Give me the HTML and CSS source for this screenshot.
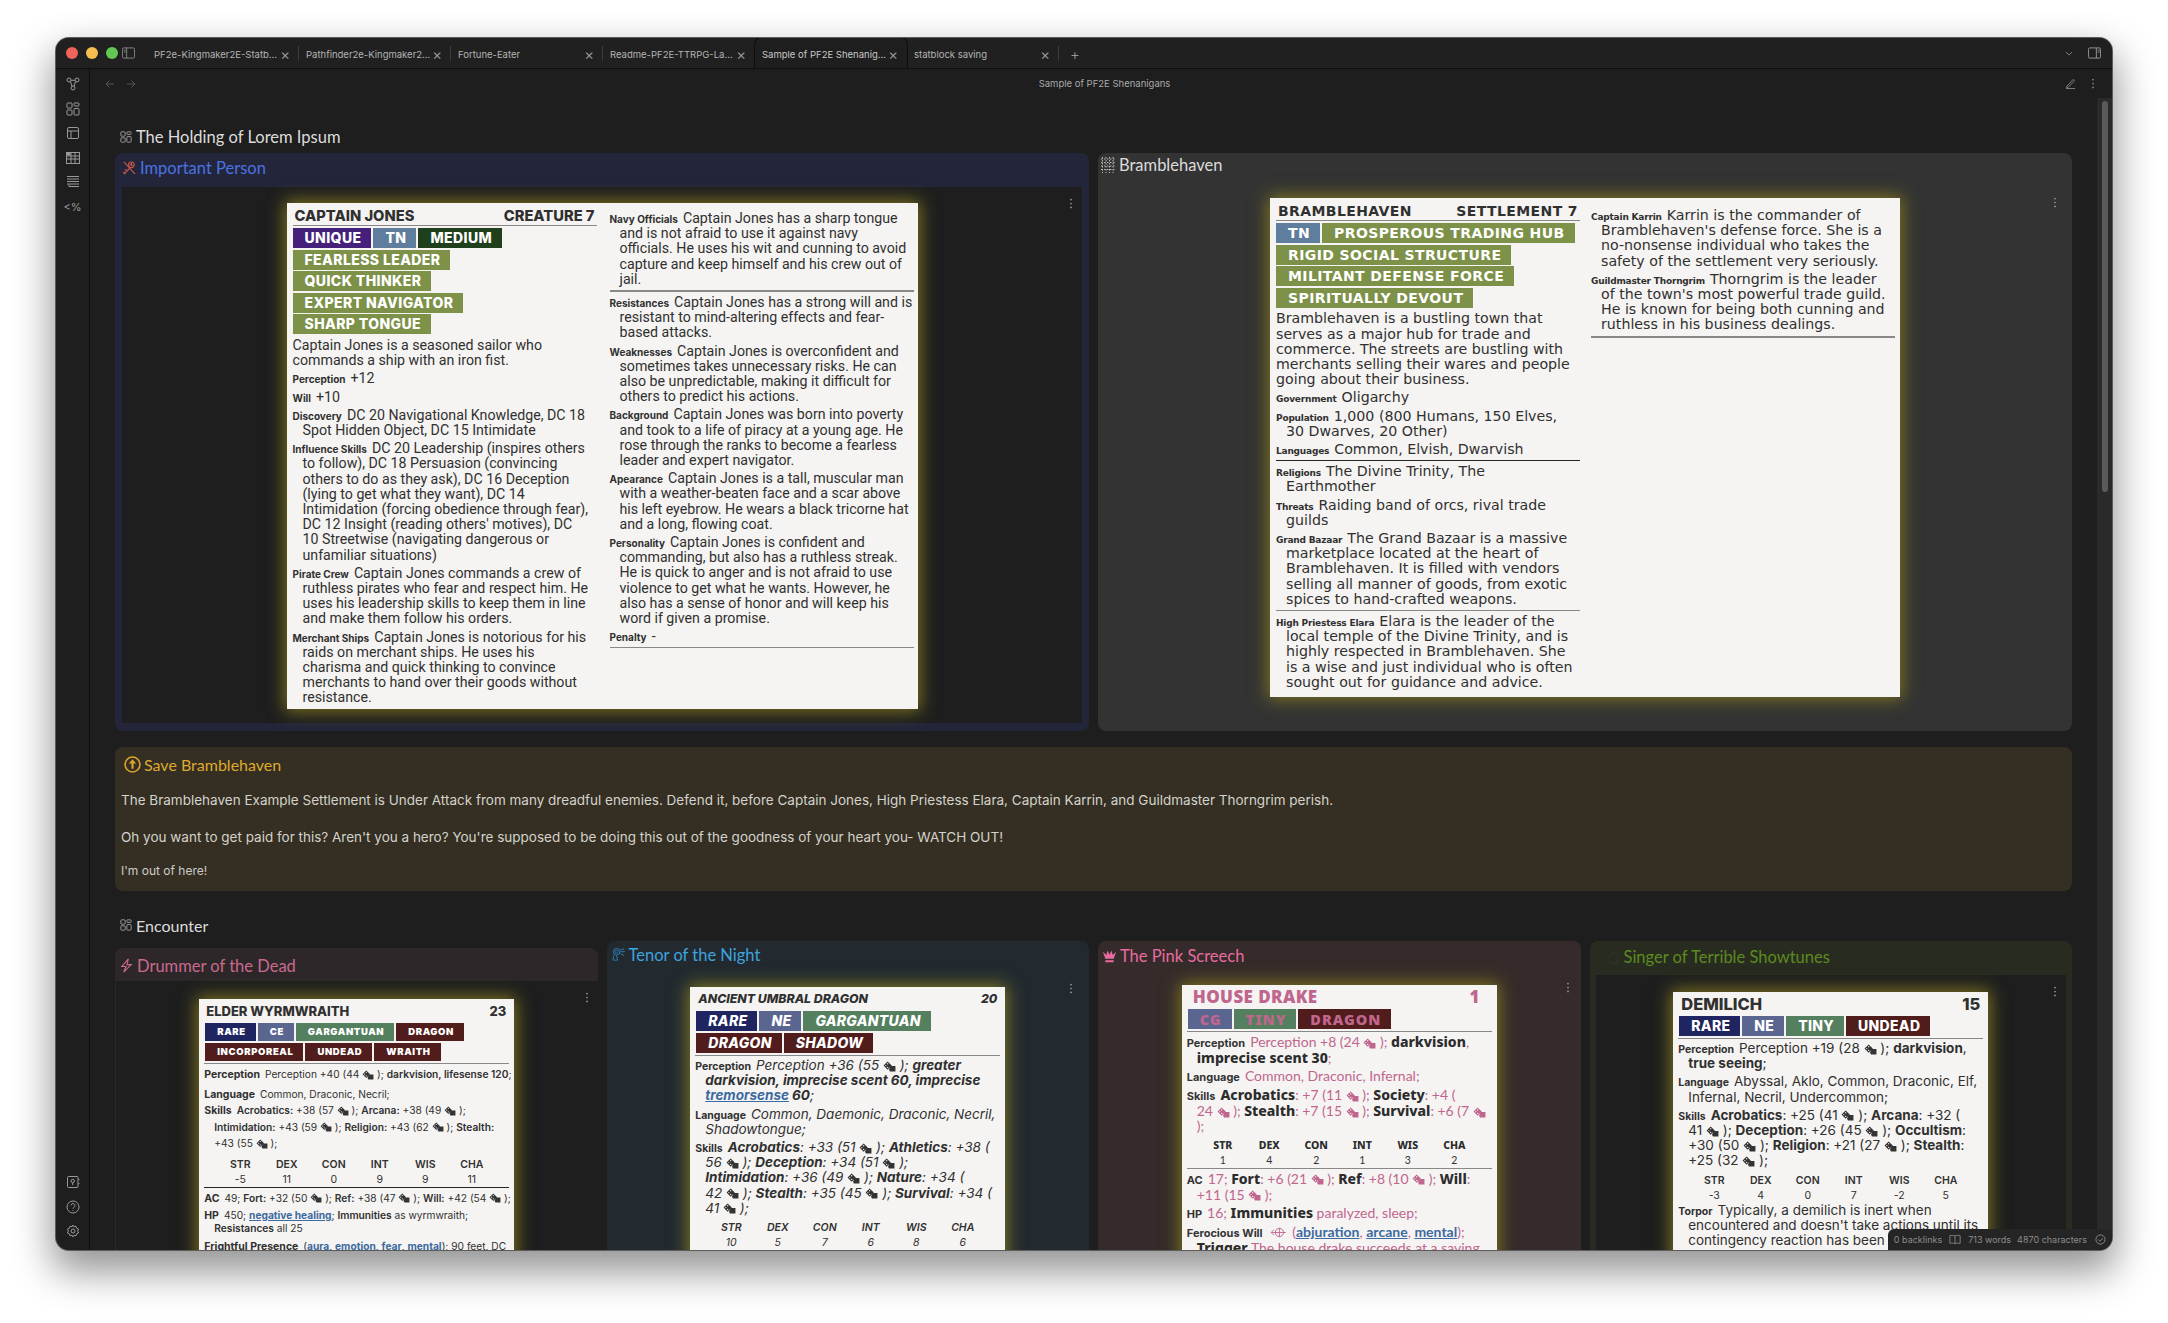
FILE: index.html
```html
<!DOCTYPE html>
<html lang="en">
<head>
<meta charset="utf-8">
<title>Sample of PF2E Shenanigans</title>
<link rel="stylesheet" href="styles.css">
</head>
<body>
<svg class="defs" aria-hidden="true">
  <symbol id="dice" viewBox="0 0 14 12"><path d="M5 0.5 9.5 5 5 9.5 0.5 5Z" fill="currentColor"/><path d="M8 5.5h5.5v6H7.5l-1-2Z" fill="currentColor"/><circle cx="5" cy="3" r=".7" fill="#f5f4f2"/><circle cx="3" cy="5" r=".7" fill="#f5f4f2"/><circle cx="5" cy="7" r=".7" fill="#f5f4f2"/></symbol>
  <symbol id="tiles" viewBox="0 0 14 14"><g fill="none" stroke="currentColor" stroke-width="1"><rect x="1" y="1" width="5" height="5" rx=".8"/><rect x="8" y="1" width="5" height="3" rx=".8"/><rect x="1" y="8" width="5" height="5" rx=".8"/><rect x="8" y="6.5" width="5" height="6.5" rx=".8"/></g></symbol>
  <symbol id="dots" viewBox="0 0 4 14"><circle cx="2" cy="2" r="1.1" fill="currentColor"/><circle cx="2" cy="7" r="1.1" fill="currentColor"/><circle cx="2" cy="12" r="1.1" fill="currentColor"/></symbol>
</svg>
<div class="window">
  <header class="tabbar">
    <span class="light red"></span><span class="light yellow"></span><span class="light green"></span>
    <svg class="sideicon" viewBox="0 0 14 12"><rect x=".5" y=".5" width="13" height="11" rx="1.5" fill="none" stroke="currentColor"/><path d="M5 .5v11" stroke="currentColor"/><path d="M2 3h2M2 5h2" stroke="currentColor"/></svg>
    <div class="tabs">
      <div class="tab"><span class="tab-name">PF2e-Kingmaker2E-Statb...</span><span class="x">×</span></div>
      <div class="tab"><span class="tab-name">Pathfinder2e-Kingmaker2...</span><span class="x">×</span></div>
      <div class="tab"><span class="tab-name">Fortune-Eater</span><span class="x">×</span></div>
      <div class="tab tab-pre"><span class="tab-name">Readme-PF2E-TTRPG-La...</span><span class="x">×</span></div>
      <div class="tab active"><span class="tab-name">Sample of PF2E Shenanig...</span><span class="x">×</span></div>
      <div class="tab"><span class="tab-name">statblock saving</span><span class="x">×</span></div>
      <span class="plus">+</span>
    </div>
    <svg class="chev" viewBox="0 0 10 6"><path d="M1 1l4 4 4-4" fill="none" stroke="currentColor"/></svg>
    <svg class="rightpanel" viewBox="0 0 14 12"><rect x=".5" y=".5" width="13" height="11" rx="1.5" fill="none" stroke="currentColor"/><path d="M9 .5v11" stroke="currentColor"/><path d="M10.500 3h2M10.500 5h2" stroke="currentColor"/></svg>
  </header>
  <div class="main">
    <nav class="ribbon">
      <svg class="rib" viewBox="0 0 14 14"><g fill="none" stroke="currentColor"><circle cx="3" cy="3" r="2"/><circle cx="11" cy="3" r="2"/><circle cx="7" cy="11" r="2"/><path d="M4.500 4.500 6 9.300M9.500 4.500 8 9.300M5 3.300h4"/></g></svg>
      <svg class="rib"><use href="#tiles"/></svg>
      <svg class="rib" viewBox="0 0 14 14"><g fill="none" stroke="currentColor"><rect x="1.500" y="1.500" width="11" height="11" rx="1.500"/><path d="M1.500 5h11M5 5v7.500"/></g></svg>
      <svg class="rib" viewBox="0 0 14 14"><g fill="none" stroke="currentColor"><rect x=".5" y="1.500" width="13" height="11"/><path d="M.5 5h13M.5 8h13M5 1.500v11M9 1.500v11"/></g><rect x="1" y="2" width="3.500" height="2.500" fill="currentColor"/></svg>
      <svg class="rib" viewBox="0 0 14 14"><path d="M1 1.500h12M1 4h12M1 6.500h12M1 9h12M3 11.500h10M3 11.500v-2" fill="none" stroke="currentColor"/></svg>
      <span class="rib-text">&lt;%</span>
      <div class="rib-spacer"></div>
      <svg class="rib" viewBox="0 0 14 14"><g fill="none" stroke="currentColor"><rect x="1.500" y="1.500" width="10.500" height="11" rx="1"/><circle cx="6.700" cy="6" r="1.700"/><path d="M6.700 7.700v2.500M13 4v1M13 8v1"/></g></svg>
      <svg class="rib" viewBox="0 0 14 14"><g fill="none" stroke="currentColor"><circle cx="7" cy="7" r="6"/><path d="M5 5.500a2 2 0 1 1 3 1.800c-.7.4-1 .8-1 1.400"/><path d="M7 10v.8"/></g></svg>
      <svg class="rib" viewBox="0 0 14 14"><g fill="none" stroke="currentColor"><circle cx="7" cy="7" r="2"/><path d="M7 1l1 1.800 2-.6.6 2 1.900.8-.8 2 .8 2-1.900.8-.6 2-2-.6-1 1.800-1-1.800-2 .6-.6-2-1.900-.8.8-2-.8-2 1.900-.8.6-2 2 .6Z"/></g></svg>
    </nav>
    <div class="content">
      <div class="viewhead">
        <svg class="nav" viewBox="0 0 10 10"><path d="M9 5H1M4.500 1.500 1 5l3.500 3.500" fill="none" stroke="currentColor"/></svg>
        <svg class="nav" viewBox="0 0 10 10"><path d="M1 5h8M5.500 1.500 9 5 5.500 8.500" fill="none" stroke="currentColor"/></svg>
        <div class="viewtitle">Sample of PF2E Shenanigans</div>
        <svg class="pencil" viewBox="0 0 12 12"><path d="M2 9 9 1.500l1.500 1.500L3.500 10 1.500 10.500ZM1 11.500h10" fill="none" stroke="currentColor"/></svg>
        <svg class="viewdots"><use href="#dots"/></svg>
      </div>
      <div class="viewbody">
        <div class="scroll">
          <h2 class="sec sec-top"><svg class="sec-icon"><use href="#tiles"/></svg>The Holding of Lorem Ipsum</h2>
          <div class="row-two">
            <section class="panel p-blue">
              <h3 class="ptitle t-blue"><svg class="picon" viewBox="0 0 16 16"><g fill="none" stroke="#c7574c" stroke-width="1.200"><path d="M2 1l12 13M2 14 8 8"/><circle cx="10" cy="4" r="3"/><path d="M8.500 3.500l3 2M10 2l.5 3"/><path d="M3 10l2-1M1 12l3 1"/></g></svg>Important Person</h3>
              <div class="pbody">
                <svg class="menu"><use href="#dots"/></svg>
                <article class="card c-captain">
                  <div class="col">
                    <div class="ttl"><span>CAPTAIN JONES</span><span>CREATURE 7</span></div>
                    <div class="tags"><b class="tag purple">UNIQUE</b><b class="tag steel">TN</b><b class="tag forest">MEDIUM</b><b class="tag olive">FEARLESS LEADER</b><br class="brk"><b class="tag olive">QUICK THINKER</b><br class="brk"><b class="tag olive">EXPERT NAVIGATOR</b><br class="brk"><b class="tag olive">SHARP TONGUE</b></div>
                    <p class="plain">Captain Jones is a seasoned sailor who<br>commands a ship with an iron fist.</p>
                    <p class="ln"><b class="lb">Perception</b>+12</p>
                    <p class="ln"><b class="lb">Will</b>+10</p>
                    <p class="ln"><b class="lb">Discovery</b>DC 20 Navigational Knowledge, DC 18<br>Spot Hidden Object, DC 15 Intimidate</p>
                    <p class="ln"><b class="lb">Influence Skills</b>DC 20 Leadership (inspires others<br>to follow), DC 18 Persuasion (convincing<br>others to do as they ask), DC 16 Deception<br>(lying to get what they want), DC 14<br>Intimidation (forcing obedience through fear),<br>DC 12 Insight (reading others' motives), DC<br>10 Streetwise (navigating dangerous or<br>unfamiliar situations)</p>
                    <p class="ln"><b class="lb">Pirate Crew</b>Captain Jones commands a crew of<br>ruthless pirates who fear and respect him. He<br>uses his leadership skills to keep them in line<br>and make them follow his orders.</p>
                    <p class="ln"><b class="lb">Merchant Ships</b>Captain Jones is notorious for his<br>raids on merchant ships. He uses his<br>charisma and quick thinking to convince<br>merchants to hand over their goods without<br>resistance.</p>
                  </div>
                  <div class="col">
                    <p class="ln"><b class="lb">Navy Officials</b>Captain Jones has a sharp tongue<br>and is not afraid to use it against navy<br>officials. He uses his wit and cunning to avoid<br>capture and keep himself and his crew out of<br>jail.</p>
                    <hr class="rule thick">
                    <p class="ln"><b class="lb">Resistances</b>Captain Jones has a strong will and is<br>resistant to mind-altering effects and fear-<br>based attacks.</p>
                    <p class="ln"><b class="lb">Weaknesses</b>Captain Jones is overconfident and<br>sometimes takes unnecessary risks. He can<br>also be unpredictable, making it difficult for<br>others to predict his actions.</p>
                    <p class="ln"><b class="lb">Background</b>Captain Jones was born into poverty<br>and took to a life of piracy at a young age. He<br>rose through the ranks to become a fearless<br>leader and expert navigator.</p>
                    <p class="ln"><b class="lb">Apearance</b>Captain Jones is a tall, muscular man<br>with a weather-beaten face and a scar above<br>his left eyebrow. He wears a black tricorne hat<br>and a long, flowing coat.</p>
                    <p class="ln"><b class="lb">Personality</b>Captain Jones is confident and<br>commanding, but also has a ruthless streak.<br>He is quick to anger and is not afraid to use<br>violence to get what he wants. However, he<br>also has a sense of honor and will keep his<br>word if given a promise.</p>
                    <p class="ln"><b class="lb">Penalty</b>-</p>
                    <hr class="rule">
                  </div>
                </article>
              </div>
            </section>
            <section class="panel p-grey">
              <h3 class="ptitle t-light"><svg class="picon" viewBox="0 0 16 16"><path d="M1 2h14M1 5.500h14M1 9h14M1 12.500h14M2.500 0v16M6 0v16M9.500 0v16M13 0v16" stroke="#bbb" stroke-dasharray="1.500 1.500" fill="none"/></svg>Bramblehaven</h3>
              <div class="pbody-flat">
                <svg class="menu menu-b"><use href="#dots"/></svg>
                <article class="card c-bramble">
                  <div class="col">
                    <div class="ttl"><span>BRAMBLEHAVEN</span><span>SETTLEMENT 7</span></div>
                    <div class="tags"><b class="tag steel">TN</b><b class="tag olive">PROSPEROUS TRADING HUB</b><b class="tag olive">RIGID SOCIAL STRUCTURE</b><br class="brk"><b class="tag olive">MILITANT DEFENSE FORCE</b><br class="brk"><b class="tag olive">SPIRITUALLY DEVOUT</b></div>
                    <p class="plain">Bramblehaven is a bustling town that<br>serves as a major hub for trade and<br>commerce. The streets are bustling with<br>merchants selling their wares and people<br>going about their business.</p>
                    <p class="ln"><b class="lb">Government</b>Oligarchy</p>
                    <p class="ln"><b class="lb">Population</b>1,000 (800 Humans, 150 Elves,<br>30 Dwarves, 20 Other)</p>
                    <p class="ln"><b class="lb">Languages</b>Common, Elvish, Dwarvish</p>
                    <hr class="rule dark">
                    <p class="ln"><b class="lb">Religions</b>The Divine Trinity, The<br>Earthmother</p>
                    <p class="ln"><b class="lb">Threats</b>Raiding band of orcs, rival trade<br>guilds</p>
                    <p class="ln"><b class="lb">Grand Bazaar</b>The Grand Bazaar is a massive<br>marketplace located at the heart of<br>Bramblehaven. It is filled with vendors<br>selling all manner of goods, from exotic<br>spices to hand-crafted weapons.</p>
                    <hr class="rule">
                    <p class="ln"><b class="lb">High Priestess Elara</b>Elara is the leader of the<br>local temple of the Divine Trinity, and is<br>highly respected in Bramblehaven. She<br>is a wise and just individual who is often<br>sought out for guidance and advice.</p>
                  </div>
                  <div class="col">
                    <p class="ln"><b class="lb">Captain Karrin</b>Karrin is the commander of<br>Bramblehaven's defense force. She is a<br>no-nonsense individual who takes the<br>safety of the settlement very seriously.</p>
                    <p class="ln"><b class="lb">Guildmaster Thorngrim</b>Thorngrim is the leader<br>of the town's most powerful trade guild.<br>He is known for being both cunning and<br>ruthless in his business dealings.</p>
                    <hr class="rule thick">
                  </div>
                </article>
              </div>
            </section>
          </div>
          <section class="panel p-save">
            <h3 class="ptitle t-gold"><svg class="picon" viewBox="0 0 16 16"><circle cx="8" cy="8" r="7" fill="none" stroke="#d9a52e" stroke-width="1.500"/><path d="M8 3 4.500 7H7v5h2V7h2.500Z" fill="#d9a52e"/></svg>Save Bramblehaven</h3>
            <p class="save-p">The Bramblehaven Example Settlement is Under Attack from many dreadful enemies. Defend it, before Captain Jones, High Priestess Elara, Captain Karrin, and Guildmaster Thorngrim perish.</p>
            <p class="save-p">Oh you want to get paid for this? Aren't you a hero? You're supposed to be doing this out of the goodness of your heart you- WATCH OUT!</p>
            <p class="save-small">I'm out of here!</p>
          </section>
          <h2 class="sec sec-enc"><svg class="sec-icon"><use href="#tiles"/></svg>Encounter</h2>
          <div class="row-four">
            <section class="panel p-rose p-drop">
              <h3 class="ptitle t-rose"><svg class="picon" viewBox="0 0 16 16"><path d="M10 1 3 9h4.500L5 15l8-8H8.500Z" fill="none" stroke="#c86a8e" stroke-width="1.200"/></svg>Drummer of the Dead</h3>
              <div class="pbody edge">
                <svg class="menu"><use href="#dots"/></svg>
                <article class="card small c-wyrm">
                  <div class="ttl"><span>ELDER WYRMWRAITH</span><span>23</span></div>
                  <div class="tags"><b class="tag navy">RARE</b><b class="tag slate">CE</b><b class="tag sage">GARGANTUAN</b><b class="tag wine">DRAGON</b><b class="tag wine">INCORPOREAL</b><b class="tag wine">UNDEAD</b><b class="tag wine">WRAITH</b></div>
                  <hr class="rule">
                  <p class="ln gap-l"><b class="lb">Perception</b>Perception +40 (44 <svg class="dice"><use href="#dice"/></svg> ); <b>darkvision, lifesense 120</b>;</p>
                  <p class="ln gap-s"><b class="lb">Language</b>Common, Draconic, Necril;</p>
                  <p class="ln tall"><b class="lb">Skills</b><b>Acrobatics:</b> +38 (57 <svg class="dice"><use href="#dice"/></svg> ); <b>Arcana:</b> +38 (49 <svg class="dice"><use href="#dice"/></svg> );<br><b>Intimidation:</b> +43 (59 <svg class="dice"><use href="#dice"/></svg> ); <b>Religion:</b> +43 (62 <svg class="dice"><use href="#dice"/></svg> ); <b>Stealth:</b><br>+43 (55 <svg class="dice"><use href="#dice"/></svg> );</p>
                  <div class="stats"><b>STR</b><b>DEX</b><b>CON</b><b>INT</b><b>WIS</b><b>CHA</b><span>-5</span><span>11</span><span>0</span><span>9</span><span>9</span><span>11</span></div>
                  <hr class="rule dark">
                  <p class="ln gap-l"><b class="lb">AC</b>49; <b>Fort:</b> +32 (50 <svg class="dice"><use href="#dice"/></svg> ); <b>Ref:</b> +38 (47 <svg class="dice"><use href="#dice"/></svg> ); <b>Will:</b> +42 (54 <svg class="dice"><use href="#dice"/></svg> );</p>
                  <p class="ln gap-s hp-row"><b class="lb">HP</b>450; <a class="lnk">negative healing</a>; <b>Immunities</b> as wyrmwraith;<br><b>Resistances</b> all 25</p>
                  <p class="ln"><b class="lb">Frightful Presence</b>(<a class="lnk">aura</a>, <a class="lnk">emotion</a>, <a class="lnk">fear</a>, <a class="lnk">mental</a>); 90 feet, DC</p>
                </article>
              </div>
            </section>
            <section class="panel p-sky">
              <h3 class="ptitle t-sky"><svg class="picon" viewBox="0 0 16 16"><g fill="none" stroke="#2f7fb5"><circle cx="6" cy="5" r="3.500"/><circle cx="6" cy="5" r="1.500"/><path d="M10 3l4-1M10 5h5M10 7l4 2M3 9l-1 5h5l-1-5"/></g></svg>Tenor of the Night</h3>
              <div class="pbody-flat flat-sky">
                <svg class="menu menu-t"><use href="#dots"/></svg>
                <article class="card mid c-umbral">
                  <div class="ttl"><span>ANCIENT UMBRAL DRAGON</span><span>20</span></div>
                  <div class="tags"><b class="tag navy">RARE</b><b class="tag slate">NE</b><b class="tag sage">GARGANTUAN</b><br class="brk"><b class="tag wine">DRAGON</b><b class="tag wine">SHADOW</b></div>
                  <hr class="rule">
                  <p class="ln"><b class="lb">Perception</b>Perception +36 (55 <svg class="dice"><use href="#dice"/></svg> ); <b>greater<br>darkvision, imprecise scent 60, imprecise<br><a class="lnk">tremorsense</a> 60</b>;</p>
                  <p class="ln"><b class="lb">Language</b>Common, Daemonic, Draconic, Necril,<br>Shadowtongue;</p>
                  <p class="ln"><b class="lb">Skills</b><b>Acrobatics</b>: +33 (51 <svg class="dice"><use href="#dice"/></svg> ); <b>Athletics</b>: +38 (<br>56 <svg class="dice"><use href="#dice"/></svg> ); <b>Deception</b>: +34 (51 <svg class="dice"><use href="#dice"/></svg> );<br><b>Intimidation</b>: +36 (49 <svg class="dice"><use href="#dice"/></svg> ); <b>Nature</b>: +34 (<br>42 <svg class="dice"><use href="#dice"/></svg> ); <b>Stealth</b>: +35 (45 <svg class="dice"><use href="#dice"/></svg> ); <b>Survival</b>: +34 (<br>41 <svg class="dice"><use href="#dice"/></svg> );</p>
                  <div class="stats"><b>STR</b><b>DEX</b><b>CON</b><b>INT</b><b>WIS</b><b>CHA</b><span>10</span><span>5</span><span>7</span><span>6</span><span>8</span><span>6</span></div>
                </article>
              </div>
            </section>
            <section class="panel p-plum">
              <h3 class="ptitle t-pink"><svg class="picon" viewBox="0 0 16 16"><path d="M1 3l2.500 7.500h9L15 3l-3.500 3.500L10 1.500 8 6 6 1.500 4.500 6.500ZM3.500 12h9v2h-9Z" fill="#e86ba0"/></svg>The Pink Screech</h3>
              <div class="pbody-flat flat-plum">
                <svg class="menu menu-p"><use href="#dots"/></svg>
                <article class="card mid c-drake">
                  <div class="ttl"><span>HOUSE DRAKE</span><span>1</span></div>
                  <div class="tags"><b class="tag slate">CG</b><b class="tag sage">TINY</b><b class="tag wine">DRAGON</b></div>
                  <hr class="rule">
                  <p class="ln"><b class="lb">Perception</b>Perception +8 (24 <svg class="dice"><use href="#dice"/></svg> ); <b>darkvision</b>,<br><b>imprecise scent 30</b>;</p>
                  <p class="ln"><b class="lb">Language</b>Common, Draconic, Infernal;</p>
                  <p class="ln"><b class="lb">Skills</b><b>Acrobatics</b>: +7 (11 <svg class="dice"><use href="#dice"/></svg> ); <b>Society</b>: +4 (<br>24 <svg class="dice"><use href="#dice"/></svg> ); <b>Stealth</b>: +7 (15 <svg class="dice"><use href="#dice"/></svg> ); <b>Survival</b>: +6 (7 <svg class="dice"><use href="#dice"/></svg><br>);</p>
                  <div class="stats"><b>STR</b><b>DEX</b><b>CON</b><b>INT</b><b>WIS</b><b>CHA</b><span>1</span><span>4</span><span>2</span><span>1</span><span>3</span><span>2</span></div>
                  <hr class="rule">
                  <p class="ln"><b class="lb">AC</b>17; <b>Fort</b>: +6 (21 <svg class="dice"><use href="#dice"/></svg> ); <b>Ref</b>: +8 (10 <svg class="dice"><use href="#dice"/></svg> ); <b>Will</b>:<br>+11 (15 <svg class="dice"><use href="#dice"/></svg> );</p>
                  <p class="ln"><b class="lb">HP</b>16; <b>Immunities</b> paralyzed, sleep;</p>
                  <p class="ln"><b class="lb">Ferocious Will</b><svg class="react" viewBox="0 0 18 12"><g fill="none" stroke="currentColor"><circle cx="10" cy="6" r="4.500"/><path d="M10 1v10M1 6h16M4 3 1 6l3 3"/></g></svg> (<a class="lnk">abjuration</a>, <a class="lnk">arcane</a>, <a class="lnk">mental</a>);<br><b>Trigger</b> The house drake succeeds at a saving</p>
                </article>
              </div>
            </section>
            <section class="panel p-moss">
              <h3 class="ptitle t-moss"><svg class="picon" viewBox="0 0 16 16"><path d="M8 2 2 8l2 2v4h8v-4l2-2Z" fill="none" stroke="#33382a"/></svg>Singer of Terrible Showtunes</h3>
              <div class="pbody">
                <svg class="menu"><use href="#dots"/></svg>
                <article class="card mid c-lich">
                  <div class="ttl"><span>DEMILICH</span><span>15</span></div>
                  <div class="tags"><b class="tag navy">RARE</b><b class="tag slate">NE</b><b class="tag sage">TINY</b><b class="tag wine">UNDEAD</b></div>
                  <hr class="rule">
                  <p class="ln"><b class="lb">Perception</b>Perception +19 (28 <svg class="dice"><use href="#dice"/></svg> ); <b>darkvision</b>,<br><b>true seeing</b>;</p>
                  <p class="ln"><b class="lb">Language</b>Abyssal, Aklo, Common, Draconic, Elf,<br>Infernal, Necril, Undercommon;</p>
                  <p class="ln"><b class="lb">Skills</b><b>Acrobatics</b>: +25 (41 <svg class="dice"><use href="#dice"/></svg> ); <b>Arcana</b>: +32 (<br>41 <svg class="dice"><use href="#dice"/></svg> ); <b>Deception</b>: +26 (45 <svg class="dice"><use href="#dice"/></svg> ); <b>Occultism</b>:<br>+30 (50 <svg class="dice"><use href="#dice"/></svg> ); <b>Religion</b>: +21 (27 <svg class="dice"><use href="#dice"/></svg> ); <b>Stealth</b>:<br>+25 (32 <svg class="dice"><use href="#dice"/></svg> );</p>
                  <div class="stats"><b>STR</b><b>DEX</b><b>CON</b><b>INT</b><b>WIS</b><b>CHA</b><span>-3</span><span>4</span><span>0</span><span>7</span><span>-2</span><span>5</span></div>
                  <p class="ln"><b class="lb">Torpor</b>Typically, a demilich is inert when<br>encountered and doesn't take actions until its<br>contingency reaction has been</p>
                </article>
              </div>
            </section>
          </div>
        </div>
        <div class="track"><div class="thumb"></div></div>
      </div>
    </div>
  </div>
  <footer class="status">
    <span>0 backlinks</span>
    <svg class="book" viewBox="0 0 14 12"><path d="M7 2C5.500 1 3 1 1 1.500v9c2-.5 4.500-.5 6 .5 1.500-1 4-1 6-.5v-9C11 1 8.500 1 7 2Zm0 0v9" fill="none" stroke="currentColor"/></svg>
    <span>713 words</span>
    <span>4870 characters</span>
    <svg class="check" viewBox="0 0 12 12"><circle cx="6" cy="6" r="5" fill="none" stroke="currentColor"/><path d="M3.500 6l2 2 3-3.500" fill="none" stroke="currentColor"/></svg>
  </footer>
</div>
</body>
</html>
```
FILE: styles.css
```css
* { box-sizing: border-box; }
html, body { margin: 0; height: 100%; overflow: hidden; background: #fff; }
body { padding: 38px 56px 0; font-family: Inter, sans-serif; }
.defs { display: none; }
.window {
  position: relative; width: 2056px; height: 1212px; overflow: hidden;
  background: #1e1e1e; border-radius: 13px; display: flex; flex-direction: column;
  box-shadow: 0 0 0 1px #5c5c5c, 0 18px 38px 4px rgba(0, 0, 0, .42);
}
.tabbar {
  height: 31px; flex: none; display: flex; align-items: center; padding-left: 10px;
  background: #202020; border-bottom: 1px solid #0e0e0e; color: #9a9a9a;
}
.light { width: 12px; height: 12px; border-radius: 50%; margin-right: 8px; }
.red { background: #f0635a; } .yellow { background: #f6bd4f; } .green { background: #62c655; margin-right: 4px; }
.sideicon { width: 13px; height: 12px; color: #888; }
.tabs { display: flex; align-items: center; height: 100%; margin-left: 12px; flex: 1; }
.tab {
  width: 152px; height: 100%; display: flex; align-items: center; justify-content: space-between;
  padding: 3px 9px 0 7px; font-size: 9.5px; color: #b4b4b4; position: relative; white-space: nowrap;
}
.tab::after { content: ""; position: absolute; right: 0; top: 8px; height: 15px; width: 1px; background: #3a3a3a; }
.tab-pre::after, .tab.active::after { display: none; }
.tab.active { background: #1e1e1e; border-radius: 6px 6px 0 0; box-shadow: 0 0 0 1px #0e0e0e; color: #c8c8c8; }
.x { font-size: 15px; font-weight: 300; color: #aaa; line-height: 1; }
.plus { font-size: 15px; font-weight: 300; color: #999; margin-left: 11px; padding-top: 3px; }
.chev { width: 8px; height: 5px; margin-right: 15px; color: #999; }
.rightpanel { width: 13px; height: 12px; margin-right: 11px; color: #999; }
.main { flex: 1; display: flex; min-height: 0; }
.ribbon {
  width: 34px; flex: none; border-right: 1px solid #0e0e0e; display: flex; flex-direction: column;
  align-items: center; padding: 8px 0 12px; gap: 10.5px; color: #999;
}
.rib { width: 14px; height: 14px; flex: none; }
.rib-text { font-size: 11px; line-height: 14px; }
.rib-spacer { flex: 1; }
.content { flex: 1; display: flex; flex-direction: column; min-width: 0; }
.viewhead { height: 29px; flex: none; display: flex; align-items: center; padding-left: 15px; color: #555; gap: 11px; }
.nav { width: 10px; height: 10px; }
.viewtitle { flex: 1; text-align: center; font-size: 9.5px; color: #aaa; padding-left: 8px; }
.pencil { width: 11px; height: 11px; color: #888; margin-right: 4px; }
.viewdots { width: 4px; height: 11px; color: #888; margin-right: 17px; }
.viewbody { flex: 1; display: flex; min-height: 0; }
.scroll { flex: 1; min-width: 0; padding: 0 25px 0 25px; overflow: hidden; }
.track { width: 15px; flex: none; background: #2a2a2a; padding: 3px 5px 0 5px; }
.thumb { height: 391px; width: 6px; background: #5a5a5a; border-radius: 3px; }
.sec {
  margin: 0; font: 400 16.5px Lato, sans-serif; color: #dcdcdc;
  display: flex; align-items: center; gap: 4px;
}
.sec-top { height: 30px; padding: 0 0 3px 5px; margin-top: 25px; }
.sec-enc { height: 32px; padding-left: 5px; margin-top: 18px; font-size: 16px; }
.sec-icon { width: 12px; height: 12px; color: #aaa; }
.row-two { display: grid; grid-template-columns: 1fr 1fr; gap: 9px; align-items: stretch; height: 578px; }
.row-four { display: grid; grid-template-columns: repeat(4, 1fr); gap: 9px; align-items: start; height: 360px; }
.panel { border-radius: 8px; position: relative; min-width: 0; }
.p-blue { background: #23263a; display: flex; flex-direction: column; padding: 0 7px 8px; }
.p-grey { background: #333; }
.p-save { background: #342f22; margin-top: 16px; height: 144px; padding: 0 5px; }
.p-rose { background: #2e2729; margin-top: 7px; }
.p-sky { background: #222a30; height: 360px; }
.p-plum { background: #352b2a; height: 360px; }
.p-moss { background: #282c20; height: 360px; padding: 0 6px; }
.ptitle {
  margin: 0; height: 33px; display: flex; align-items: center; gap: 3px; padding-left: 4px;
  font: 400 16.5px Lato, sans-serif;
}
.p-blue .ptitle { padding: 0 0 4px; height: 34px; }
.p-grey .ptitle { height: 23px; padding-left: 2px; }
.p-grey .picon { width: 16px; height: 16px; }
.p-save .ptitle { height: 34px; }
.p-save .picon { width: 17px; height: 17px; }
.p-rose .ptitle { padding-top: 2px; }
.p-sky .ptitle { height: 26px; padding-top: 1px; }
.p-plum .ptitle { height: 30px; }
.p-moss .ptitle { height: 34px; padding: 0 0 2px 10px; }
.t-blue { color: #4a72e2; } .t-light { color: #dcdcdc; } .t-gold { color: #dfa92e; font-size: 16px; }
.t-rose { color: #c86a8e; } .t-sky { color: #3fa3df; } .t-pink { color: #e86ba0; } .t-moss { color: #5d8a1f; }
.picon { width: 15px; height: 15px; flex: none; }
.pbody, .pbody-flat { position: relative; display: flex; justify-content: center; align-items: flex-start; }
.pbody { flex: 1; background: #1e1e1e; padding-top: 16px; }
.pbody.edge { height: 330px; margin-left: 1px; padding-top: 18px; }
.p-moss .pbody { height: 330px; padding-top: 17px; }
.pbody-flat { padding-top: 22px; }
.flat-sky { padding-top: 20px; }
.flat-plum { padding-top: 14px; }
.menu { position: absolute; top: 11px; right: 9px; width: 4px; height: 11px; color: #999; }
.menu-b { top: 21px; right: 15px; }
.menu-t { top: 16px; right: 16px; }
.menu-p { top: 11px; right: 11px; }
.card {
  background: #f5f4f2; color: #303030; flex: none; box-shadow: 0 0 16px 2px #7f7522;
  font-size: 14px; line-height: 15.2px;
}
.card p { margin: 0; white-space: nowrap; }
.c-captain { width: 631px; height: 506px; display: flex; gap: 13px; padding: 4px 4px 0 6px; font-family: Roboto, sans-serif; font-size: 14.2px; }
.c-bramble { width: 630px; height: 499px; display: flex; gap: 11px; padding: 4px 5px 0 6px; font-family: "DejaVu Sans", sans-serif; font-size: 14.2px; }
.col { flex: 1; min-width: 0; }
.c-captain .col + .col { padding-top: 4px; }
.c-bramble .col + .col { padding-top: 6px; }
.ttl { display: flex; justify-content: space-between; font-weight: 800; }
.c-captain .ttl { font: 800 14.7px/18px Inter, sans-serif; padding: 0 2px; border-bottom: 1px solid #888; }
.c-bramble .ttl { font: 700 14px/18px "DejaVu Sans", sans-serif; padding: 0 2px; border-bottom: 1px solid #888; letter-spacing: .4px; }
.tags { line-height: 0; margin: 2px 0 2px; }
.tag { display: inline-block; color: #fff; vertical-align: top; margin: 0 2px 2px 0; }
.brk { display: block; }
.c-captain .tag { font: 800 14px/20px Inter, sans-serif; letter-spacing: .4px; padding: 0 10px 0 12px; margin-bottom: 1.600px; }
.c-bramble .tag { font: 700 14px/20px "DejaVu Sans", sans-serif; letter-spacing: .4px; padding: 0 10px 0 12px; margin-bottom: 1.600px; }
.purple { background: #45207a; } .steel { background: #5f7d9d; } .forest { background: #203f1c; } .olive { background: #7d9149; }
.navy { background: #1e2560; } .slate { background: #5a6690; } .sage { background: #55805f; } .wine { background: #501c1c; }
.ln { padding-left: 10px; text-indent: -10px; margin-bottom: 3px !important; }
.plain { margin-bottom: 3px !important; }
.lb { font: 600 10px Inter, sans-serif; margin-right: 5px; }
.ln b { font-weight: 700; }
.rule { border: 0; height: 1px; background: #888; margin: 1px 0 3px; }
.rule.thick { height: 2px; }
.rule.dark { background: #222; }
.c-bramble .lb { font-family: "DejaVu Sans", sans-serif; font-size: 9px; font-weight: 700; letter-spacing: -.2px; }
.dice { width: 13px; height: 11px; vertical-align: -1.500px; color: #333; }
.stats { display: grid; grid-template-columns: 46px 47px 47px 45px 46px 47px; justify-items: center; padding-left: 13px; margin: 4px 0 0; font-size: 10.500px; line-height: 15px; }
.stats b { font-weight: 600; }
.small, .mid { width: 315px; height: 400px; padding: 0 5px; }
.small { font-size: 10.2px; line-height: 16.5px; }
.small .ttl { font: 800 13px/24px Inter, sans-serif; padding: 0 3px 0 2px; }
.small .tag { font: 900 9.500px/18px Inter, sans-serif; letter-spacing: .6px; padding: 0 10px 0 12px; }
.small .tags { margin: 0 0 0 1px; }
.small .rule { margin: 0 0 2px; }
.small .stats { margin-top: 5px; }
.small b:not(.tag):not(.lb) { font-weight: 600; }
.small .dice { width: 12px; height: 10px; }
.gap-l { margin-bottom: 3px !important; }
.gap-s { margin-bottom: 0 !important; }
.hp-row { line-height: 13px; margin-top: 6px; margin-bottom: 3px !important; }
.small .lb { font-size: 10.500px; }
.lnk { color: #3d6a9f; text-decoration: underline; font-weight: 700; }
.mid { font-size: 13.500px; line-height: 15.2px; }
.mid .lb { font-size: 10.500px; }
.mid .ttl { font: 800 12.300px/24px Inter, sans-serif; padding: 0 3px; }
.mid .tag { font: 800 14px/20px Inter, sans-serif; letter-spacing: .3px; padding: 0 10px 0 12px; }
.mid .tags { margin: 0 0 0 1px; }
.mid .rule { margin: 0 0 2px; }
.c-umbral { font-style: italic; }
.c-umbral .lb { font-style: normal; }
.c-umbral .ttl, .c-umbral .tag { font-style: italic; }
.c-lich .ttl { font-size: 16.500px; line-height: 24px; }
.c-drake { font-family: Lato, sans-serif; color: #c0668e; font-size: 14px; }
.c-drake b:not(.lb):not(.tag) { font-family: "Noto Sans", sans-serif; font-weight: 800; color: #2c2c2c; }
.c-drake .lb { color: #333; font-size: 11px; }
.c-drake .ttl { font: 900 17px/24px "Noto Sans", sans-serif; letter-spacing: .4px; color: #c0668e; padding: 0 12px 0 6px; }
.c-drake .tag { color: #c0668e; font: 900 14.500px/20px "Noto Sans", sans-serif; letter-spacing: 1px; padding: 0 10px 0 12px; }
.c-drake .stats { color: #333; }
.c-drake .stats b { color: #333; font-family: Inter, sans-serif; font-weight: 600; }
.c-drake .dice { color: #c0668e; }
.react { width: 17px; height: 11px; vertical-align: -1px; color: #c0668e; margin: 0 2px; }
.save-p { margin: 0; font: 400 13.500px/20px Inter, sans-serif; color: #d4d2cc; padding-left: 1px; height: 37px; display: flex; align-items: center; white-space: nowrap; }
.save-small { margin: 0; font: 400 12px/20px Inter, sans-serif; color: #ccc; padding-left: 1px; padding-top: 6px; }
.status {
  position: absolute; right: 0; bottom: 0; height: 21px; display: flex; align-items: center; gap: 6px;
  background: #252525; color: #8c8c8c; font-size: 9px; padding: 0 6px 0 6px; border-radius: 6px 0 0 0;
}
.book { width: 12px; height: 11px; margin: 0 1px; }
.check { width: 11px; height: 11px; margin-left: 2px; }
```
